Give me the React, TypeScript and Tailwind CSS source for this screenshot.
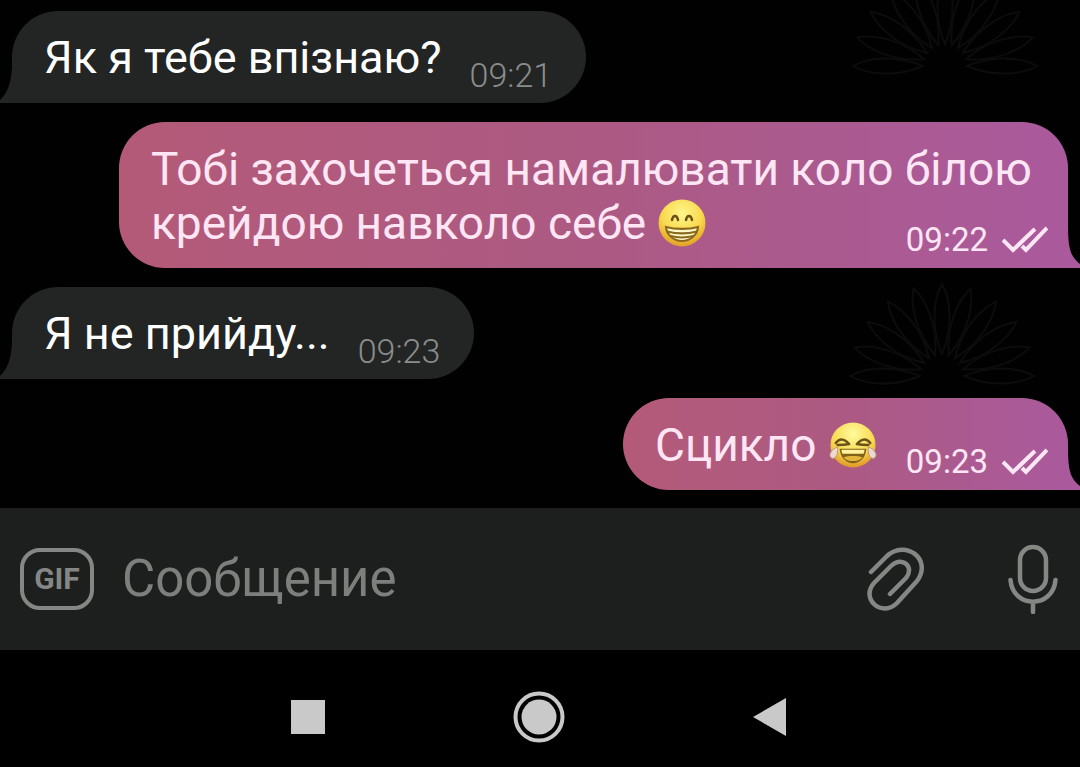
import React from "react";

function DoubleCheck() {
  return (
    <svg viewBox="0 0 46 28" className="h-7 w-[46px] shrink-0" fill="none" stroke="currentColor" strokeWidth="4" aria-label="Прочитано" role="img">
      <path d="M1 14 L11 24 L33 3" />
      <path d="M20 20 L24 24 L45 2" />
    </svg>
  );
}

function GrinEmoji() {
  return (
    <svg viewBox="0 0 48 48" className="inline-block size-12 align-[-8px]" role="img" aria-label="Усмішка">
      <defs>
        <radialGradient id="grin" cx="0.5" cy="0.3" r="0.72">
          <stop offset="0" stopColor="#fff78c" />
          <stop offset="0.6" stopColor="#f8d84c" />
          <stop offset="1" stopColor="#e09a22" />
        </radialGradient>
      </defs>
      <circle cx="24" cy="24" r="23.500" fill="url(#grin)" />
      <path d="M14 21c1-5.500 5-5.500 6 0M28 21c1-5.500 5-5.500 6 0" fill="none" stroke="#6b5218" strokeWidth="2.500" strokeLinecap="round" />
      <path d="M8 28c9 2.500 23 2.500 32 0-.5 8-8 14-16 14S8.500 36 8 28z" fill="#fff9c8" stroke="#8a681c" strokeWidth="2.200" />
      <path d="M9 32.500c10 2.500 20 2.500 30 0M12.500 37c8 2 15 2 23 0" fill="none" stroke="#8a681c" strokeWidth="2" />
    </svg>
  );
}

function JoyEmoji() {
  return (
    <svg viewBox="0 0 50 50" className="inline-block h-12 w-[50px] align-[-8px]" role="img" aria-label="Сміх до сліз">
      <defs>
        <radialGradient id="joy" cx="0.5" cy="0.25" r="0.78">
          <stop offset="0" stopColor="#fffb9e" />
          <stop offset="0.6" stopColor="#f8d94f" />
          <stop offset="1" stopColor="#dd8f22" />
        </radialGradient>
      </defs>
      <circle cx="25" cy="25" r="23.500" fill="url(#joy)" />
      <path d="M7 23c4-5 8-5 14 1-5 1-9 1-12 1M43 23c-4-5-8-5-14 1 5 1 9 1 12 1" fill="none" stroke="#6b5218" strokeWidth="2.600" strokeLinecap="round" strokeLinejoin="round" />
      <path d="M11 29h28c-1 10-7 15-14 15s-13-5-14-15z" fill="#80611a" />
      <path d="M13 30h24c0 2-.5 3-1 4H14c-.5-1-1-2-1-4z" fill="#fff29a" />
      <path d="M15 38c5-2 15-2 20 0-4 5-16 5-20 0z" fill="#e3b53a" />
      <path d="M9 27c-6 2-10 8-7 11 3 3 8-1 7-11zM41 27c6 2 10 8 7 11-3 3-8-1-7-11z" fill="#ecd9d5" stroke="#b99a72" strokeWidth="1" />
    </svg>
  );
}

function Incoming({ children, time }: { children: React.ReactNode; time: string }) {
  return (
    <li className="flex pl-3">
      <article className="relative flex items-end gap-7 rounded-[46px] rounded-bl-none bg-[#222524] pr-[34px] pl-8 text-white">
        <svg viewBox="0 0 14 36" className="absolute bottom-0 -left-3 h-9 w-[14px] fill-[#222524]" aria-hidden="true">
          <path d="M14 0H12C11 16 8 25 0 33V36H14Z" />
        </svg>
        <p className="pt-5 pb-[18px] text-[45px] leading-[54px]">{children}</p>
        <time className="pb-[10px] text-[34px] leading-9 font-light text-[#8b8d8c]">{time}</time>
      </article>
    </li>
  );
}

function Outgoing({ children, time }: { children: React.ReactNode; time: string }) {
  return (
    <li className="flex justify-end pr-3">
      <article className="relative max-w-[949px] rounded-l-[46px] rounded-tr-[46px] bg-linear-to-r from-[#b45a78] via-[#ac5a83] to-[#aa5a9c] pt-5 pr-5 pb-[18px] pl-8 text-[46px] leading-[54px] text-[#ffe6f5]">
        <svg viewBox="0 0 14 44" className="absolute -right-3 bottom-0 h-11 w-[14px] fill-[#aa5a9c]" aria-hidden="true">
          <path d="M0 0H2C2 24 4 32 14 40V44H0Z" />
        </svg>
        <p className="inline">{children}</p>
        <div className="float-right mt-[26px] -mb-2 ml-7 flex items-center gap-[14px]">
          <time className="text-[33px] leading-9">{time}</time>
          <DoubleCheck />
        </div>
      </article>
    </li>
  );
}

function Flower() {
  const angles = [-90, -72, -54, -36, -18, 0, 18, 36, 54, 72, 90];
  return (
    <g fill="none" stroke="#0a0d0a" strokeWidth="2">
      {angles.map((a) => (
        <path key={a} d="M0-22C-12-50-8-78 0-92C8-78 12-50 0-22Z" transform={`rotate(${a})`} />
      ))}
    </g>
  );
}

function Wallpaper() {
  return (
    <svg className="absolute inset-0 size-full" aria-hidden="true">
      <svg x="100%" overflow="visible">
        <g transform="translate(-138 376)"><Flower /></g>
        <g transform="translate(-135 66)"><Flower /></g>
      </svg>
    </svg>
  );
}

export default function App() {
  return (
    <div className="flex min-h-screen flex-col bg-black font-['Roboto',sans-serif]">
      <main className="relative grow bg-[#010101] pt-[11px] pb-[18px]">
        <Wallpaper />
        <ul className="relative flex flex-col gap-[19px]">
          <Incoming time="09:21">Як я тебе впізнаю?</Incoming>
          <Outgoing time="09:22">
            Тобі захочеться намалювати коло білою крейдою навколо себе <GrinEmoji />
          </Outgoing>
          <Incoming time="09:23">Я не прийду...</Incoming>
          <Outgoing time="09:23">
            Сцикло <JoyEmoji />
          </Outgoing>
        </ul>
      </main>
      <form className="flex h-[142px] items-center bg-[#1c1f1d] pr-[22px] pl-5 text-[#858785]" onSubmit={(e) => e.preventDefault()}>
        <button type="button" aria-label="GIF" className="flex h-[62px] w-[74px] shrink-0 items-center justify-center rounded-[20px] border-4 border-current text-[30px] leading-8 font-bold">
          GIF
        </button>
        <input aria-label="Сообщение" placeholder="Сообщение" className="ml-[28px] h-16 min-w-0 grow bg-transparent text-[51px] outline-none placeholder:text-[#7d7f7d]" />
        <button type="button" aria-label="Прикрепить файл" className="shrink-0">
          <svg viewBox="0 0 58 64" className="h-16 w-[58px]" fill="none" stroke="currentColor" strokeWidth="4.500" strokeLinecap="round" strokeLinejoin="round">
            <path d="M4 25L20 9C38-8 66 12 50 34L30 56C15 71-7 52 7 36L24 19C35 8 48 20 39 31L23 47" />
          </svg>
        </button>
        <button type="button" aria-label="Голосовое сообщение" className="ml-[83px] shrink-0">
          <svg viewBox="0 0 50 70" className="h-[70px] w-[50px]" fill="none" stroke="currentColor" strokeWidth="4.500" strokeLinecap="round">
            <rect x="12" y="3" width="26" height="44" rx="13" />
            <path d="M2.500 36C5 65 45 65 47.500 36M25 58V68" />
          </svg>
        </button>
      </form>
      <nav aria-label="Системная навигация" className="flex h-[117px] items-center justify-center gap-[187px] pt-4 pr-[2px] text-[#c9c9c9]">
        <button type="button" aria-label="Недавние">
          <svg viewBox="0 0 36 36" className="size-9 fill-current"><path d="M1 1H35V35H1Z" /></svg>
        </button>
        <button type="button" aria-label="Домой">
          <svg viewBox="0 0 52 52" className="size-[52px]"><circle cx="26" cy="26" r="23.500" fill="none" stroke="currentColor" strokeWidth="4" /><circle cx="26" cy="26" r="17.500" fill="currentColor" /></svg>
        </button>
        <button type="button" aria-label="Назад">
          <svg viewBox="0 0 36 40" className="h-10 w-9 fill-current"><path d="M1 20L34 1V39Z" /></svg>
        </button>
      </nav>
    </div>
  );
}
